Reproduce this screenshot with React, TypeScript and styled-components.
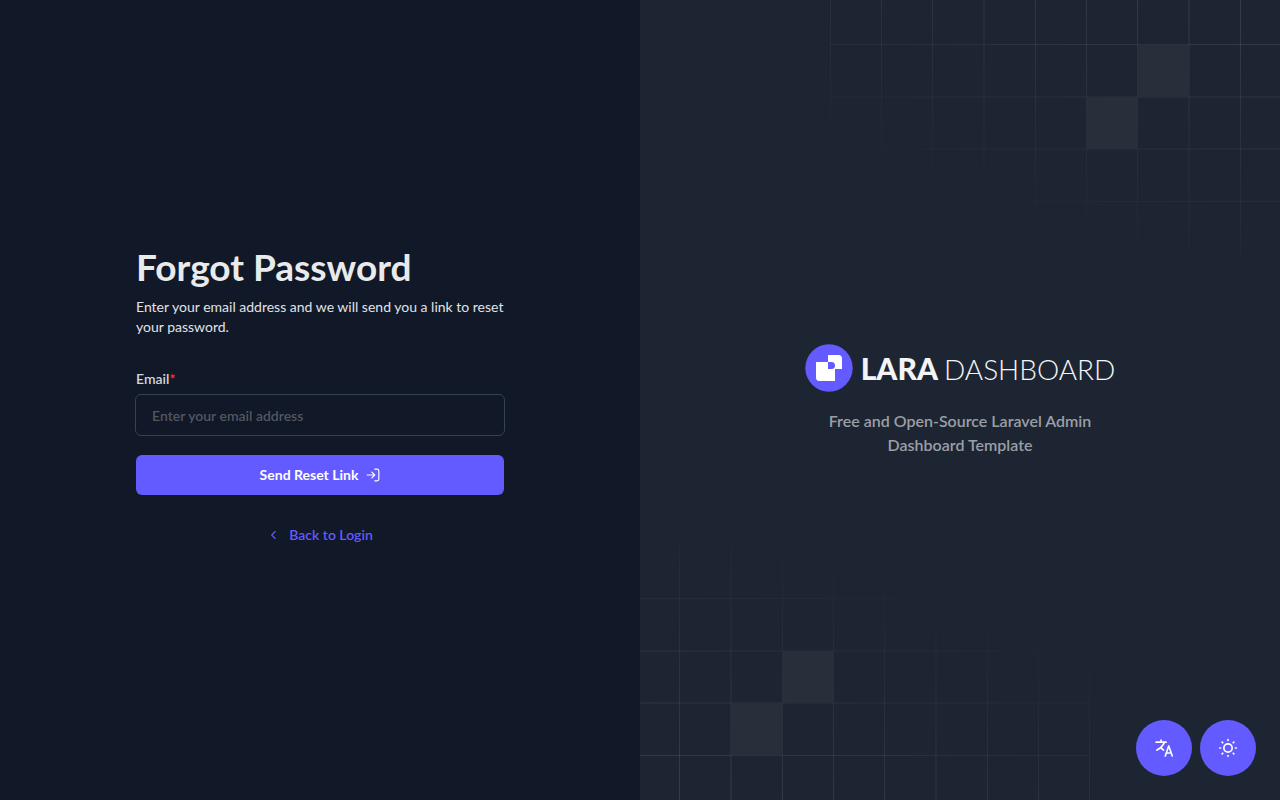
import React from "react";
import styled, { createGlobalStyle } from "styled-components";

const GlobalStyle = createGlobalStyle`
  *, *::before, *::after { box-sizing: border-box; }
  body {
    margin: 0;
    background: #111827;
    color: #e5e7eb;
    font-family: "Lato", "Liberation Sans", sans-serif;
    font-size: 14px;
    line-height: 20px;
  }
`;

const Page = styled.main`
  display: grid;
  grid-template-columns: 1fr 1fr;
  min-height: 100vh;
  @media (max-width: 900px) { grid-template-columns: 1fr; }
`;

const FormPanel = styled.section`
  display: flex;
  align-items: center;
  justify-content: center;
  padding: 24px 24px 34px;
`;

const FormColumn = styled.div`
  width: 100%;
  max-width: 368px;
`;

const Title = styled.h1`
  margin: 0 0 8px;
  font-size: 37px;
  line-height: 44px;
  font-weight: 700;
  color: #e8eaec;
`;

const Intro = styled.p`
  margin: 0 0 32px;
  font-weight: 400;
  color: #e0e3e8;
`;

const Form = styled.form`
  display: flex;
  flex-direction: column;
  gap: 20px;
`;

const Field = styled.div`
  display: flex;
  flex-direction: column;
  gap: 6px;
`;

const Label = styled.label`
  font-weight: 600;
  color: #d1d5db;
`;

const Required = styled.span`
  color: #fb2c36;
  font-weight: 700;
`;

const TextInput = styled.input`
  height: 42px;
  margin: -1px;
  padding: 0 16px;
  border: 1px solid #364153;
  border-radius: 6px;
  background: transparent;
  color: #e5e7eb;
  font: inherit;
  font-weight: 600;
  &::placeholder { color: #525761; opacity: 1; }
`;

const SubmitButton = styled.button`
  display: flex;
  align-items: center;
  justify-content: center;
  gap: 8px;
  height: 40px;
  border: 0;
  border-radius: 6px;
  background: #635bff;
  color: #fff;
  font: inherit;
  font-weight: 700;
  cursor: pointer;
`;

const BackRow = styled.div`
  display: flex;
  justify-content: center;
  margin-top: 30px;
`;

const BackLink = styled.a`
  display: flex;
  align-items: center;
  gap: 8px;
  color: #635bff;
  font-weight: 600;
  text-decoration: none;
`;

const BrandPanel = styled.section`
  position: relative;
  display: flex;
  align-items: center;
  justify-content: center;
  overflow: hidden;
  background: #1e2532;
`;

const Pattern = styled.svg<{ $corner: "top" | "bottom" }>`
  position: absolute;
  width: 450px;
  height: 254px;
  ${(p) => (p.$corner === "top" ? "top: 0; right: 0;" : "bottom: 0; left: 0; transform: rotate(180deg);")}
`;

const Brand = styled.div`
  position: relative;
  display: flex;
  flex-direction: column;
  align-items: center;
  gap: 16px;
`;

const Logo = styled.div`
  display: flex;
  align-items: center;
  gap: 8px;
`;

const Wordmark = styled.span`
  display: flex;
  align-items: baseline;
  gap: 6px;
  font-size: 28px;
  line-height: 48px;
  font-weight: 300;
  color: #f3f4f6;
  white-space: nowrap;
`;

const WordmarkStrong = styled.strong`
  font-size: 30px;
  font-weight: 900;
`;

const Tagline = styled.p`
  max-width: 288px;
  margin: 0;
  font-size: 16px;
  line-height: 24px;
  font-weight: 600;
  text-align: center;
  color: #9a9fa7;
`;

const FloatingActions = styled.div`
  position: fixed;
  right: 24px;
  bottom: 24px;
  display: flex;
  gap: 8px;
`;

const RoundButton = styled.button`
  display: grid;
  place-items: center;
  width: 56px;
  height: 56px;
  padding: 0;
  border: 0;
  border-radius: 50%;
  background: #635bff;
  color: #fff;
  cursor: pointer;
`;

const COLUMNS = [0.5, 51.5, 102.5, 154, 205.5, 256.5, 307.5, 359, 410.5];
const ROWS = [44.5, 97, 149, 201.5];

function GridPattern({ corner }: { corner: "top" | "bottom" }) {
  const id = `fade-${corner}`;
  return (
    <Pattern $corner={corner} viewBox="0 0 450 254" aria-hidden="true">
      <defs>
        <linearGradient id={id} gradientUnits="userSpaceOnUse" x1="411" y1="0" x2="307" y2="274">
          <stop stopColor="#b2b2c0" stopOpacity="0.16" />
          <stop offset="1" stopColor="#b2b2c0" stopOpacity="0" />
        </linearGradient>
      </defs>
      <g stroke={`url(#${id})`} strokeWidth="1">
        {COLUMNS.map((x) => <path key={x} d={`M${x} 0L${x + 0.01} 254`} />)}
        {ROWS.map((y) => <path key={y} d={`M0 ${y}L450 ${y + 0.01}`} />)}
      </g>
      <path d="M307.5 44.5H359V97H307.5ZM256.5 97H307.5V149H256.5Z" fill="#292e3b" />
    </Pattern>
  );
}

function LogoMark() {
  return (
    <svg width="48" height="48" viewBox="0 0 48 48" aria-hidden="true">
      <circle cx="24" cy="24" r="23.7" fill="#635bff" />
      <path
        fill="#fff"
        d="M11 18H23V11H33.5Q37 11 37 14.5V25H30V37H14.5Q11 37 11 33.5ZM23 18V25H26.5A3.5 3.5 0 0 0 26.5 18Z"
        fillRule="evenodd"
      />
    </svg>
  );
}

const iconProps = {
  viewBox: "0 0 24 24",
  fill: "none",
  stroke: "currentColor",
  strokeLinecap: "round" as const,
  strokeLinejoin: "round" as const,
  "aria-hidden": true,
};

export default function App() {
  return (
    <>
      <GlobalStyle />
      <Page>
        <FormPanel>
          <FormColumn>
            <Title>Forgot Password</Title>
            <Intro>Enter your email address and we will send you a link to reset your password.</Intro>
            <Form onSubmit={(e) => e.preventDefault()}>
              <Field>
                <Label htmlFor="email">Email<Required>*</Required></Label>
                <TextInput id="email" type="email" placeholder="Enter your email address" />
              </Field>
              <SubmitButton type="submit">
                Send Reset Link
                <svg {...iconProps} width="14" height="14" strokeWidth="2">
                  <path d="M15 2h4a3 3 0 0 1 3 3v14a3 3 0 0 1-3 3h-4M10 17l5-5-5-5M15 12H2" />
                </svg>
              </SubmitButton>
            </Form>
            <BackRow>
              <BackLink href="#login">
                <svg {...iconProps} width="14" height="14" strokeWidth="2"><path d="m14 6-6 6 6 6" /></svg>
                Back to Login
              </BackLink>
            </BackRow>
          </FormColumn>
        </FormPanel>
        <BrandPanel>
          <GridPattern corner="top" />
          <GridPattern corner="bottom" />
          <Brand>
            <Logo>
              <LogoMark />
              <Wordmark><WordmarkStrong>LARA</WordmarkStrong> DASHBOARD</Wordmark>
            </Logo>
            <Tagline>Free and Open-Source Laravel Admin Dashboard Template</Tagline>
          </Brand>
        </BrandPanel>
      </Page>
      <FloatingActions>
        <RoundButton type="button" aria-label="Change language">
          <svg {...iconProps} width="20" height="20" strokeWidth="2">
            <path d="M2.500 5h12M8.500 2.500v2.500M12.500 5c-1.500 4-5 7.500-9 9.500M8.500 12l3 2.500M13.500 21.500l4.200-12 4.200 12M15 18h5.500" />
          </svg>
        </RoundButton>
        <RoundButton type="button" aria-label="Toggle theme">
          <svg {...iconProps} width="20" height="20" strokeWidth="2">
            <circle cx="12" cy="12" r="5" />
            <path d="M12 2v1M12 21v1M2 12h1M21 12h1M5 5l.7.7M18.3 18.3l.7.7M5 19l.7-.7M18.3 5.7l.7-.7" />
          </svg>
        </RoundButton>
      </FloatingActions>
    </>
  );
}
